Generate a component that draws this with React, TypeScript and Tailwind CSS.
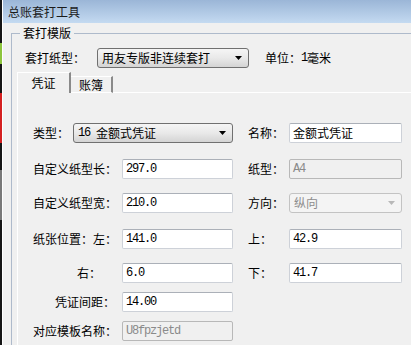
import React from "react";

const cjk = "font-['Noto_Sans_CJK_SC',sans-serif] text-[12px] leading-[16px]";
const mono = "font-['Liberation_Mono',monospace] text-[12px] leading-[16px] tracking-[-1.2px]";

const Arrow = ({ disabled }: { disabled?: boolean }) => (
  <svg width="7" height="4" viewBox="0 0 7 4" className="shrink-0">
    <polygon points="0,0 7,0 3.5,4" fill={disabled ? "#b8b8b8" : "#000"} />
  </svg>
);

const Combo = ({
  width,
  children,
  disabled,
}: {
  width: string;
  children: React.ReactNode;
  disabled?: boolean;
}) => (
  <div
    className={
      width +
      " h-[20px] flex items-center justify-between pl-[4px] pr-[6px] rounded-[3px] border " +
      (disabled
        ? "border-[#c3c3c3] bg-[#f4f4f4] text-[#8d8d8d]"
        : "border-[#707070] bg-linear-to-b from-[#f5f5f5] via-[#e9e9e9] to-[#d4d4d4] text-black")
    }
  >
    <div className="flex items-center">{children}</div>
    <Arrow disabled={disabled} />
  </div>
);

const TextBox = ({
  width,
  value,
  disabled,
}: {
  width: string;
  value: string;
  disabled?: boolean;
}) => (
  <div
    className={
      width +
      " h-[20px] flex items-center px-[3px] rounded-[2px] border " +
      (disabled
        ? "border-[#b8b8b8] bg-[#f0f0f0] text-[#8a8a8a]"
        : "border-[#cdd1d8] border-t-[#abb0b8] bg-white text-black")
    }
  >
    <span className={mono}>{value}</span>
  </div>
);

const Row = ({
  label,
  pad,
  value,
  right,
  mt,
}: {
  label: string;
  pad: string;
  value: React.ReactNode;
  right?: React.ReactNode;
  mt: string;
}) => (
  <div className={"flex items-center h-[20px] " + mt}>
    <div className={"w-[89px] flex " + pad}>
      <span className={cjk}>{label}</span>
    </div>
    {value}
    {right}
  </div>
);

const RightPart = ({ label, box }: { label: string; box: React.ReactNode }) => (
  <>
    <div className="w-[41px] ml-[15px] flex">
      <span className={cjk}>{label}</span>
    </div>
    {box}
  </>
);

export default function App() {
  return (
    <div className="w-[411px] h-[345px] overflow-hidden flex bg-[#f0f0f0] text-black text-[12px] leading-[16px]">
      {/* edge of the window behind */}
      <div className="w-[2px] flex flex-col bg-[#151515]">
        <div className="h-[43px]" />
        <div className="h-[21px] bg-[#8cc43c]" />
        <div className="h-[29px]" />
        <div className="h-[50px] bg-[#d42020]" />
        <div className="h-[27px]" />
        <div className="h-[50px] bg-[#7a7a7a]" />
      </div>

      <div className="flex-1 flex flex-col border-l border-white min-w-0">
        {/* title bar */}
        <div className="h-[23px] shrink-0 flex items-center pl-[5px] bg-linear-to-b from-[#9bb6d7] to-[#c4daf1]">
          <span className={cjk + " text-[#1b1b1b]"}>总账套打工具</span>
        </div>

        <div className="flex-1 pl-[8px] pt-[2px]">
          <fieldset className="border-l border-t border-[#aebacb] h-full">
            <legend className={cjk + " ml-[8px] px-[3px]"}>套打模版</legend>

            <div className="pl-[13px] pt-[7px] flex items-center h-[26px]">
              <span className={cjk + " w-[72px]"}>套打纸型：</span>
              <Combo width="w-[152px]">
                <span className={cjk}>用友专版非连续套打</span>
              </Combo>
              <span className={cjk + " ml-[16px]"}>单位：</span>
              <span className={mono}>1</span>
              <span className={cjk}>毫米</span>
            </div>

            {/* tabs */}
            <div className="ml-[5px] mt-[5px] flex items-end h-[21px]">
              <div className="w-[54px] h-[21px] border-l border-t border-white border-r-2 border-r-[#8a8a8a] flex items-center justify-center pb-[1px]">
                <span className={cjk}>凭证</span>
              </div>
              <div className="w-[42px] h-[17px] border-t border-b border-white border-r-2 border-r-[#8a8a8a] flex items-center justify-center">
                <span className={cjk}>账簿</span>
              </div>
              <div className="flex-1 border-b border-white" />
            </div>

            {/* tab page */}
            <div className="ml-[5px] border-l border-white pl-[15px] pt-[30px] h-[260px]">
              <div className="flex items-center h-[20px]">
                <span className={cjk + " w-[40px]"}>类型：</span>
                <Combo width="w-[160px]">
                  <span className={mono + " mr-[6px]"}>16</span>
                  <span className={cjk}>金额式凭证</span>
                </Combo>
                <div className="w-[41px] ml-[15px] flex">
                  <span className={cjk}>名称：</span>
                </div>
                <div className="w-[113px] h-[20px] flex items-center px-[3px] rounded-[2px] border border-[#cdd1d8] border-t-[#abb0b8] bg-white">
                  <span className={cjk}>金额式凭证</span>
                </div>
              </div>

              <Row
                mt="mt-[16px]"
                label="自定义纸型长："
                pad=""
                value={<TextBox width="w-[111px]" value="297.0" />}
                right={<RightPart label="纸型：" box={<TextBox width="w-[113px]" value="A4" disabled />} />}
              />
              <Row
                mt="mt-[14px]"
                label="自定义纸型宽："
                pad=""
                value={<TextBox width="w-[111px]" value="210.0" />}
                right={
                  <RightPart
                    label="方向："
                    box={
                      <Combo width="w-[113px]" disabled>
                        <span className={cjk}>纵向</span>
                      </Combo>
                    }
                  />
                }
              />
              <Row
                mt="mt-[16px]"
                label="纸张位置：左："
                pad=""
                value={<TextBox width="w-[111px]" value="141.0" />}
                right={<RightPart label="上：" box={<TextBox width="w-[113px]" value="42.9" />} />}
              />
              <Row
                mt="mt-[14px]"
                label="右："
                pad="pl-[44px]"
                value={<TextBox width="w-[111px]" value="6.0" />}
                right={<RightPart label="下：" box={<TextBox width="w-[113px]" value="41.7" />} />}
              />
              <Row
                mt="mt-[9px]"
                label="凭证间距："
                pad="pl-[22px]"
                value={<TextBox width="w-[111px]" value="14.00" />}
              />
              <Row
                mt="mt-[9px]"
                label="对应模板名称："
                pad=""
                value={<TextBox width="w-[111px]" value="U8fpzjetd" disabled />}
              />
            </div>
          </fieldset>
        </div>
      </div>
    </div>
  );
}
